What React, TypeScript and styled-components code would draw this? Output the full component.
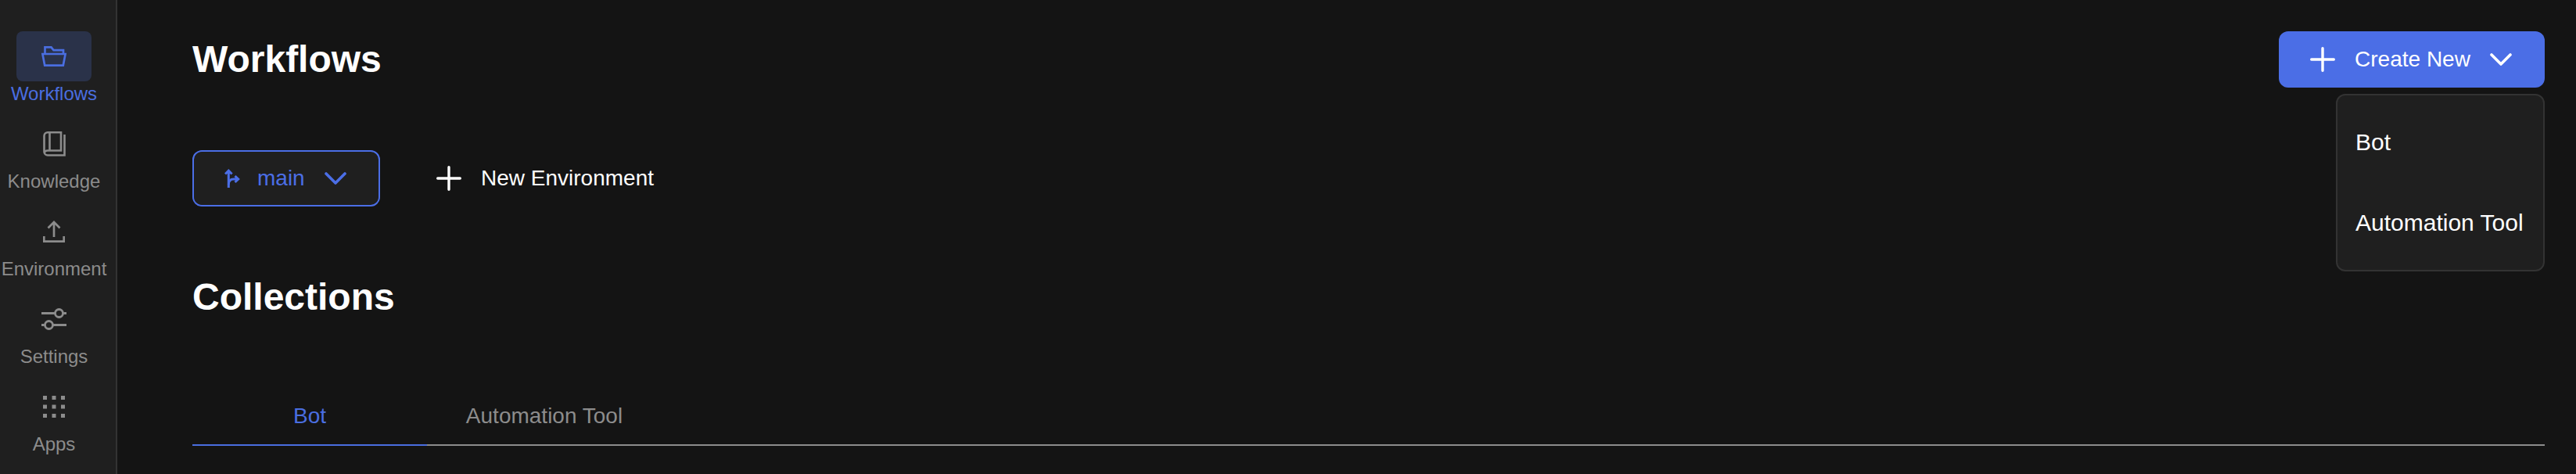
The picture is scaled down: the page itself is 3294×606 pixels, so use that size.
import React from "react";
import styled, { createGlobalStyle } from "styled-components";

const Global = createGlobalStyle`
  html, body { margin: 0; padding: 0; background: #141414; }
  body { font-family: "Liberation Sans", Arial, sans-serif; }
`;

const Page = styled.div`
  display: flex;
  width: 3294px;
  height: 606px;
  overflow: hidden;
  background: #141414;
`;

const Sidebar = styled.nav`
  flex: none;
  box-sizing: border-box;
  width: 150px;
  padding: 40px 10px 0 0;
  display: flex;
  flex-direction: column;
  gap: 18px;
  background: #1f1f1f;
  border-right: 2px solid #333;
`;

const NavItem = styled.div<{ $active?: boolean }>`
  display: flex;
  flex-direction: column;
  align-items: center;
  color: ${(p) => (p.$active ? "#4a6ee0" : "#8c8c8c")};
`;

const NavIcon = styled.div<{ $active?: boolean }>`
  flex: none;
  width: 96px;
  height: 64px;
  display: flex;
  align-items: center;
  justify-content: center;
  border-radius: 8px;
  background: ${(p) => (p.$active ? "#2a3249" : "transparent")};
`;

const NavLabel = styled.span`
  margin-top: 2px;
  font-size: 24px;
  line-height: 28px;
  white-space: nowrap;
`;

const Main = styled.main`
  flex: 1;
  min-width: 0;
  box-sizing: border-box;
  padding: 40px 40px 0 96px;
`;

const Header = styled.header`
  display: flex;
  align-items: center;
  justify-content: space-between;
  height: 72px;
`;

const Title = styled.h1`
  margin: 0;
  font-size: 48px;
  line-height: 56px;
  font-weight: 700;
  color: #fff;
`;

const CreateWrap = styled.div`
  position: relative;
`;

const CreateButton = styled.button`
  box-sizing: border-box;
  width: 340px;
  height: 72px;
  padding: 0 42px 0 40px;
  display: flex;
  align-items: center;
  justify-content: space-between;
  border: 0;
  border-radius: 12px;
  background: #4b6ee6;
  color: #fff;
  font: 400 28px "Liberation Sans", Arial, sans-serif;
`;

const Menu = styled.div`
  position: absolute;
  top: 80px;
  right: 0;
  box-sizing: border-box;
  width: 267px;
  height: 227px;
  padding-left: 23px;
  display: flex;
  flex-direction: column;
  background: #1f1f1f;
  border: 2px solid #333;
  border-radius: 12px;
`;

const MenuItem = styled.div`
  height: 103px;
  display: flex;
  align-items: center;
  font-size: 30px;
  color: #fff;
  white-space: nowrap;
  &:first-child { margin-top: 8px; }
`;

const EnvRow = styled.div`
  display: flex;
  align-items: center;
  gap: 72px;
  margin-top: 80px;
`;

const BranchSelect = styled.button`
  box-sizing: border-box;
  width: 240px;
  height: 72px;
  padding: 0 41px 0 39px;
  display: flex;
  align-items: center;
  gap: 22px;
  background: #1f1f1f;
  border: 2px solid #4b6ee6;
  border-radius: 12px;
  color: #4b6ee6;
  font: 400 28px "Liberation Sans", Arial, sans-serif;
  svg:last-child { margin-left: auto; }
`;

const NewEnv = styled.div`
  display: flex;
  align-items: center;
  gap: 25px;
  color: #fff;
  font-size: 28px;
`;

const SectionTitle = styled(Title)`
  margin-top: 88px;
`;

const Tabs = styled.div`
  display: flex;
  margin-top: 94px;
  border-bottom: 2px solid #8c8c8c;
`;

const Tab = styled.div<{ $active?: boolean }>`
  width: 300px;
  height: 60px;
  padding-bottom: 6px;
  margin-bottom: -2px;
  display: flex;
  align-items: center;
  justify-content: center;
  font-size: 28px;
  color: ${(p) => (p.$active ? "#4a6ee0" : "#8c8c8c")};
  border-bottom: 2px solid ${(p) => (p.$active ? "#4a6ee0" : "transparent")};
`;

const Plus = () => (
  <svg width="32" height="32" viewBox="0 0 32 32" fill="none" stroke="currentColor" strokeWidth="3.4" strokeLinecap="round">
    <path d="M16 1.7v28.600M1.700 16h28.600" />
  </svg>
);

const Chevron = () => (
  <svg width="28" height="16" viewBox="0 0 28 16" fill="none" stroke="currentColor" strokeWidth="3.6" strokeLinecap="round" strokeLinejoin="round">
    <path d="M2 2l12 12L26 2" />
  </svg>
);

const Branch = () => (
  <svg width="20" height="24" viewBox="0 0 20 24" fill="none" stroke="currentColor" strokeWidth="3">
    <path d="M5.300 24V2M1 6.500l4.300-4.300 4.300 4.300" />
    <path d="M5.300 20c0-4.500 2.500-7 6.500-7h5.500M13.500 9l4.200 4-4.200 4" />
  </svg>
);

const FolderIcon = () => (
  <svg width="32" height="26" viewBox="0 0 32 26" fill="none" stroke="currentColor" strokeWidth="2.700">
    <path d="M4.500 9V1.400h8l3 3.800H28V9" />
    <path d="M1.400 10H30.600L27.800 24.600H4.200z" />
  </svg>
);

const BookIcon = () => (
  <svg width="29" height="32" viewBox="0 0 29 32" fill="none" stroke="currentColor" strokeWidth="2.600">
    <path d="M27.500 4v26.500H6a4.500 4.500 0 0 1-4.500-4.500V5.500A4.500 4.500 0 0 1 6 1.300h17v23.200H6A4.500 4.500 0 0 0 1.500 28" />
    <path d="M8.500 1.300v23.200" />
  </svg>
);

const UploadIcon = () => (
  <svg width="28" height="28" viewBox="0 0 28 28" fill="none" stroke="currentColor" strokeWidth="2.700">
    <path d="M14 21V2M6.500 9.500L14 2l7.500 7.500M1.300 20v6.700h25.400V20" />
  </svg>
);

const SlidersIcon = () => (
  <svg width="32" height="28" viewBox="0 0 32 28" fill="none" stroke="currentColor" strokeWidth="2.800">
    <path d="M0 6.500h17.500M27.500 6.500H32M0 21.500h4.500M14.500 21.500H32" />
    <circle cx="22.500" cy="6.500" r="5" />
    <circle cx="9.500" cy="21.500" r="5" />
  </svg>
);

const GridIcon = () => (
  <svg width="28" height="28" viewBox="0 0 28 28" fill="currentColor">
    {[0, 11.500, 23].map((y) =>
      [0, 11.500, 23].map((x) => <rect key={`${x}-${y}`} x={x} y={y} width="5" height="5" />)
    )}
  </svg>
);

const navItems = [
  { label: "Workflows", icon: <FolderIcon />, active: true },
  { label: "Knowledge", icon: <BookIcon /> },
  { label: "Environment", icon: <UploadIcon /> },
  { label: "Settings", icon: <SlidersIcon /> },
  { label: "Apps", icon: <GridIcon /> },
];

export default function App() {
  return (
    <Page>
      <Global />
      <Sidebar>
        {navItems.map((item) => (
          <NavItem key={item.label} $active={item.active}>
            <NavIcon $active={item.active}>{item.icon}</NavIcon>
            <NavLabel>{item.label}</NavLabel>
          </NavItem>
        ))}
      </Sidebar>
      <Main>
        <Header>
          <Title>Workflows</Title>
          <CreateWrap>
            <CreateButton>
              <Plus />
              <span>Create New</span>
              <Chevron />
            </CreateButton>
            <Menu>
              <MenuItem>Bot</MenuItem>
              <MenuItem>Automation Tool</MenuItem>
            </Menu>
          </CreateWrap>
        </Header>
        <EnvRow>
          <BranchSelect>
            <Branch />
            <span>main</span>
            <Chevron />
          </BranchSelect>
          <NewEnv>
            <Plus />
            <span>New Environment</span>
          </NewEnv>
        </EnvRow>
        <SectionTitle>Collections</SectionTitle>
        <Tabs>
          <Tab $active>Bot</Tab>
          <Tab>Automation Tool</Tab>
        </Tabs>
      </Main>
    </Page>
  );
}
